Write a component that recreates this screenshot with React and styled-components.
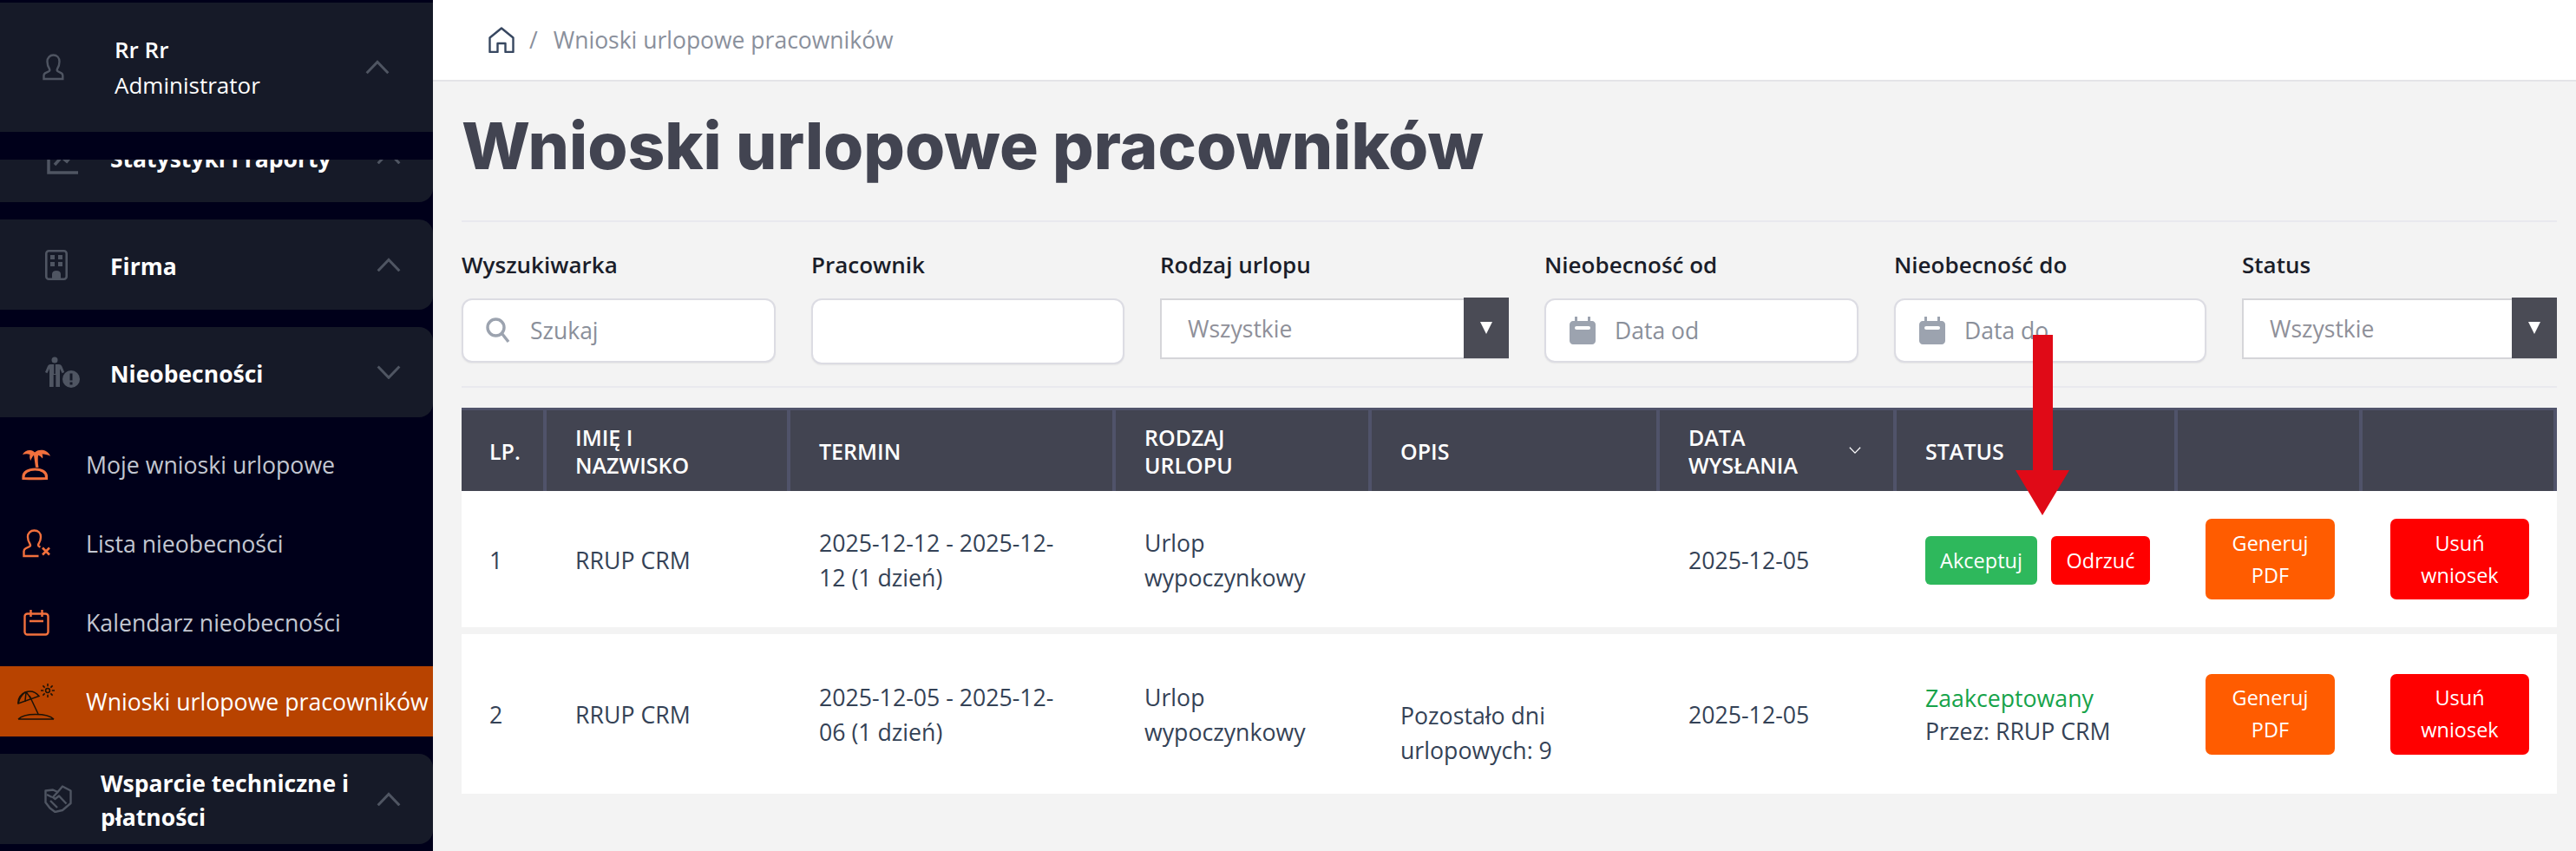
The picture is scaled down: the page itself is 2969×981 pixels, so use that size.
import React from 'react';
import styled, { createGlobalStyle } from 'styled-components';

const GlobalStyle = createGlobalStyle`
  html, body {
    margin: 0;
    padding: 0;
    background: #f3f3f3;
  }
  body {
    font-family: 'Open Sans', 'Noto Sans', sans-serif;
    overflow: hidden;
  }
  * {
    box-sizing: border-box;
  }
`;

const Page = styled.div`
  display: flex;
  width: 2969px;
  height: 981px;
  overflow: hidden;
`;

const Sidebar = styled.aside`
  flex: 0 0 499px;
  height: 981px;
  padding-top: 3px;
  background: #00001a;
  overflow: hidden;
`;

const ProfileCard = styled.div`
  display: flex;
  align-items: center;
  height: 149px;
  background: #161a28;
  color: #fff;
  margin-bottom: 32px;
`;

const ProfileText = styled.div`
  flex: 1;
  font-size: 26px;
  line-height: 41px;
  font-weight: 400;

  b {
    display: block;
    font-weight: 600;
  }
`;

const NavCard = styled.div`
  display: flex;
  align-items: ${p => (p.$clipped ? 'flex-end' : 'center')};
  height: ${p => (p.$clipped ? '49px' : '104px')};
  margin-bottom: ${p => p.$gap || 20}px;
  background: #161a28;
  border-radius: ${p => (p.$clipped ? '0 0 16px 0' : '0 16px 16px 0')};
  overflow: hidden;
`;

const NavCardInner = styled.div`
  display: flex;
  align-items: center;
  flex: 1;
  height: 104px;
  flex-shrink: 0;
  color: #fff;
  font-size: 26.500px;
  font-weight: 700;
  line-height: 39px;
`;

const CardIcon = styled.div`
  flex: 0 0 ${p => p.$width}px;
  padding-left: ${p => p.$inset}px;
  display: flex;
  align-items: center;
`;

const CardLabel = styled.div`
  flex: 1;
  padding-top: 4px;
`;

const ChevronSlot = styled.div`
  flex: 0 0 ${p => p.$width || 65}px;
  display: flex;
`;

const SubList = styled.div`
  padding-top: 13px;
  margin-bottom: 20px;
  display: flex;
  flex-direction: column;
  gap: 10px;
`;

const SubItem = styled.div`
  display: flex;
  align-items: center;
  height: 81px;
  background: ${p => (p.$active ? '#b84300' : 'transparent')};
  color: ${p => (p.$active ? '#fff' : '#c3c7d1')};
  font-size: 26.700px;
  white-space: nowrap;
`;

const SubIcon = styled.div`
  flex: 0 0 99px;
  padding-right: 15px;
  display: flex;
  justify-content: center;
`;

const Main = styled.main`
  flex: 1;
  position: relative;
  min-width: 0;
`;

const TopBar = styled.header`
  display: flex;
  align-items: center;
  height: 94px;
  padding-left: 64px;
  background: #fff;
  border-bottom: 2px solid #e4e4e8;
  color: #8a909c;
  font-size: 26.500px;
`;

const Slash = styled.span`
  margin: 0 18px 0 17px;
`;

const Content = styled.div`
  padding: 0 22px 0 33px;
`;

const Title = styled.h1`
  display: flex;
  align-items: center;
  height: 162px;
  margin: 0;
  padding-bottom: 12px;
  border-bottom: 2px solid #e9e9ee;
  color: #424451;
  font-family: 'Inter', sans-serif;
  font-size: 74.700px;
  font-weight: 800;
`;

const Filters = styled.div`
  display: grid;
  grid-template-columns: 362px 361px 402px 362px 360px 363px;
  column-gap: 41px;
  align-items: start;
  padding: 31px 0 25px;
  border-bottom: 2px solid #e9e9ee;
`;

const FilterLabel = styled.label`
  display: block;
  height: 36px;
  margin-bottom: 21px;
  color: #1a1d29;
  font-size: 26px;
  font-weight: 600;
  line-height: 36px;
`;

const InputBox = styled.div`
  display: flex;
  align-items: center;
  gap: ${p => p.$gap}px;
  height: ${p => p.$height || 74}px;
  padding-left: 26px;
  background: #fff;
  border: 2px solid #dcdce3;
  border-radius: 12px;
  box-shadow: 0 1px 2px rgba(0, 0, 0, 0.06);
  color: #8a8f9a;
  font-size: 26.500px;
`;

const SelectBox = styled.div`
  display: flex;
  align-items: center;
  justify-content: space-between;
  height: 70px;
  padding-left: 30px;
  background: #fff;
  border: 2px solid #d5d5d9;
  border-right: 0;
  color: #8f9099;
  font-size: 26.500px;
`;

const SelectArrow = styled.div`
  display: flex;
  align-items: center;
  justify-content: center;
  width: 52px;
  height: 70px;
  margin-top: -2px;
  background: #4a4b55;

  &::after {
    content: '';
    border-left: 7px solid transparent;
    border-right: 7px solid transparent;
    border-top: 14px solid #fff;
  }
`;

const Table = styled.div`
  margin-top: 23px;
`;

const columns = '98px 281px 375px 295px 332px 273px 324px 213px 224px';

const HeadRow = styled.div`
  display: grid;
  grid-template-columns: ${columns};
  height: 96px;
  background: #424451;
  border-top: 3px solid #50536a;
`;

const HeadCell = styled.div`
  display: flex;
  align-items: center;
  justify-content: space-between;
  padding: 0 37px 0 ${p => (p.$first ? 32 : 33)}px;
  border-right: 4px solid #50536a;
  color: #fff;
  font-size: 25px;
  font-weight: 600;
  line-height: 32px;
  text-transform: uppercase;
`;

const HeadLabel = styled.span`
  max-width: 170px;
`;

const BodyRow = styled.div`
  display: grid;
  grid-template-columns: ${columns};
  height: ${p => p.$height}px;
  margin-bottom: 8px;
  background: #fff;
  color: #344256;
  font-size: 26.700px;
  line-height: 40px;
`;

const Cell = styled.div`
  display: flex;
  align-items: center;
  padding: ${p => (p.$shifted ? '44px' : '2px')} 45px 0 ${p => (p.$first ? 32 : 33)}px;
`;

const ActionCell = styled(Cell)`
  padding: 0;
`;

const StatusCell = styled(Cell)`
  gap: 16px;
  padding-right: 0;
`;

const StatusText = styled.div`
  white-space: nowrap;
  line-height: 38px;
`;

const Accepted = styled.div`
  color: #16a34a;
`;

const SmallButton = styled.button`
  height: 56px;
  width: ${p => p.$width}px;
  padding: 0;
  border: 0;
  border-radius: 6px;
  background: ${p => p.$bg};
  color: #fff;
  font-family: inherit;
  font-size: 23.500px;
  cursor: pointer;
`;

const BigButton = styled.button`
  width: ${p => p.$width}px;
  height: 93px;
  margin-left: 32px;
  padding: 0 10px;
  border: 0;
  border-radius: 7px;
  background: ${p => p.$bg};
  color: #fff;
  font-family: inherit;
  font-size: 23.500px;
  line-height: 37px;
  cursor: pointer;
`;

const Arrow = styled.svg`
  position: absolute;
  left: 1824px;
  top: 386px;
`;

const Chevron = ({ up, color = '#4f5562', size = 28, weight = 3 }) => (
  <svg width={size} height={size * 0.6} viewBox="0 0 28 17" fill="none" stroke={color} strokeWidth={weight}>
    <path d={up ? 'M1.5 15.5 14 2.5l12.5 13' : 'M1.5 1.5 14 14.5 26.5 1.5'} />
  </svg>
);

const UserIcon = () => (
  <svg width="25" height="31" viewBox="0 0 25 31" fill="none" stroke="#4f5562" strokeWidth="2.4">
    <path d="M8 17.5C6 14.5 5.5 12 5.5 9c0-4.5 3-7.5 7-7.5s7 3 7 7.5c0 3-.5 5.5-2.5 8.5-.5 1-.3 2 .8 2.7l4 2.2c1 .6 1.5 1.400 1.500 2.600v4H1.500v-4c0-1.200.5-2 1.500-2.600l4.200-2.200c1.100-.7 1.300-1.700.8-2.700z" />
  </svg>
);

const StatsIcon = () => (
  <svg width="36" height="40" viewBox="0 0 36 40" fill="none" stroke="#4f5562" strokeWidth="3.5">
    <path d="M2 2v36h34" />
    <path d="M9 29l8-9 6 5 9-11" />
  </svg>
);

const BuildingIcon = () => (
  <svg width="26" height="35" viewBox="0 0 26 35" fill="none">
    <rect x="1.300" y="1.300" width="23.400" height="32.400" rx="3" stroke="#4f5562" strokeWidth="2.600" />
    <g fill="#4f5562">
      <rect x="6" y="6" width="5" height="5" />
      <rect x="15" y="6" width="5" height="5" />
      <rect x="6" y="14" width="5" height="5" />
      <rect x="15" y="14" width="5" height="5" />
      <path d="M8 34v-6c0-2.500 2-4 5-4s5 1.500 5 4v6z" />
    </g>
  </svg>
);

const AbsenceIcon = () => (
  <svg width="40" height="36" viewBox="0 0 40 36" fill="#4f5562">
    <circle cx="11" cy="4" r="3.500" />
    <path d="M6 9h10c1.500 0 2.500.7 3.200 2l3 7-2.600 1.300L17 14v21h-4.700V21h-2.600v14H5V14l-2.600 5.300L0 18l3-7c.7-1.300 1.600-2 3-2z" />
    <rect x="10.200" y="9" width="1.600" height="11" fill="#161a28" />
    <circle cx="30" cy="26" r="10" />
    <rect x="28.500" y="19.500" width="3" height="8" fill="#161a28" />
    <rect x="28.500" y="29.500" width="3" height="3" fill="#161a28" />
  </svg>
);

const HandshakeIcon = () => (
  <svg width="32" height="32" viewBox="0 0 32 32" fill="none" stroke="#4f5562" strokeWidth="2.400" strokeLinejoin="round">
    <path d="M1.500 6.500 10 5.500l5.500 2.500L21 1.500l9.500 5v14.500L21 29l-8.500 2-6-4.500-5-6.500z" />
    <path d="M15.500 8 10 14l2.500 2 4.500-3.500 8.500 9" />
    <path d="M7 18l8 8M3 11l6 3" />
  </svg>
);

const PalmIcon = () => (
  <svg width="34" height="36" viewBox="0 0 34 36" fill="none">
    <path
      fill="#f2703d"
      d="M1 6C3 2 7 .5 10 1c2 .2 3.500 1 5 2.500C18 .8 21 .5 24 .8c4 .5 7.500 3 9 7-3-1.500-6.500-2.500-9.500-2.200 1 2 1 3.500.5 5-1.500-2-3.500-3.500-5-3.800-.5 4-.5 8.500.5 14.200l-3.500-.2-2-14C12 9 11 11 10.300 13 9 10 9 8 9.500 6 7 4.800 4 5 1 6z"
    />
    <path
      fill="none"
      stroke="#f2703d"
      strokeWidth="3.200"
      d="M2 33.500v-2c0-5 5.500-8.500 13.500-8.500S28.500 26.500 28.500 31.500v2c-8 .3-18 .3-26.500 0z"
    />
  </svg>
);

const UserXIcon = () => (
  <svg width="32" height="33" viewBox="0 0 32 33" fill="none" stroke="#f2703d" strokeWidth="2.400">
    <path d="M18.500 31H1.500v-5.500c0-1.500.8-2.500 2-3.200l4.500-2.300c1.200-.7 1.200-1.800.5-3-1.800-2.800-2.500-5.500-2.500-8C6 4.500 9 1.500 13.500 1.500S21 4.500 21 9c0 2.500-.7 5.200-2.500 8-.8 1.200-.5 2.300.8 3l1.200.6" />
    <path d="M23 21.500l8 8M31 21.500l-8 8" strokeWidth="2.600" />
  </svg>
);

const CalendarIcon = ({ color = '#f2703d' }) => (
  <svg width="30" height="30" viewBox="0 0 30 30" fill="none" stroke={color} strokeWidth="2.400">
    <rect x="1.500" y="4.500" width="27" height="24" rx="3" />
    <path d="M8.500 0v8M21.500 0v8M7 13h16" />
  </svg>
);

const BeachIcon = () => (
  <svg width="44" height="42" viewBox="0 0 44 42" fill="none" stroke="#1a1208" strokeWidth="1.500">
    <path d="M1 41h41M1 41c4-4 12-5.500 20-5.500s17 1.500 21 5.500" />
    <path d="M14 14l10 21" />
    <path d="M1 23c-.5-6 3-11 8-13 6-2.200 12-.5 16 4.500z" />
    <path d="M1 23c1-5 3-9 8-13M9 21c0-4 1-8 1-11.500M16 18c-2-3-4-6-6-8.500" />
    <circle cx="35" cy="8" r="2.400" />
    <path d="M35 0v3.200M35 12.800V16M27 8h3.200M39.800 8H43M29.400 2.400l2.200 2.200M38.400 11.400l2.200 2.200M29.400 13.600l2.200-2.200M38.400 4.600l2.200-2.200" />
  </svg>
);

const HomeIcon = () => (
  <svg width="30" height="30" viewBox="0 0 30 30" fill="none" stroke="#374760" strokeWidth="2.400">
    <path d="M1.500 29V12.500L15 1.500l13.500 11V29h-9V19h-9v10z" strokeLinejoin="round" />
  </svg>
);

const SearchIcon = () => (
  <svg width="28" height="30" viewBox="0 0 28 30" fill="none" stroke="#9ca3af" strokeWidth="3.400">
    <circle cx="11.500" cy="11.500" r="9.500" />
    <path d="M18.500 18.500 26 28" />
  </svg>
);

const CalendarFilled = () => (
  <svg width="32" height="32" viewBox="0 0 32 32" fill="#9ca3af">
    <path d="M7 0h3v5h12V0h3v5h2c2 0 4 2 4 4v19c0 2-2 4-4 4H5c-2 0-4-2-4-4V9c0-2 2-4 4-4h2z" />
    <rect x="7" y="11" width="18" height="4" rx="2" fill="#fff" />
  </svg>
);

const filters = [
  { label: 'Wyszukiwarka', kind: 'search', text: 'Szukaj' },
  { label: 'Pracownik', kind: 'text', text: '' },
  { label: 'Rodzaj urlopu', kind: 'select', text: 'Wszystkie' },
  { label: 'Nieobecność od', kind: 'date', text: 'Data od' },
  { label: 'Nieobecność do', kind: 'date', text: 'Data do' },
  { label: 'Status', kind: 'select', text: 'Wszystkie' }
];

const headers = ['Lp.', 'Imię i nazwisko', 'Termin', 'Rodzaj urlopu', 'Opis', 'Data wysłania', 'Status', '', ''];

const renderFilter = ({ kind, text }) => {
  if (kind === 'select') {
    return (
      <SelectBox>
        {text}
        <SelectArrow />
      </SelectBox>
    );
  }
  return (
    <InputBox $height={kind === 'text' ? 76 : 74} $gap={kind === 'search' ? 23 : 21}>
      {kind === 'search' && <SearchIcon />}
      {kind === 'date' && <CalendarFilled />}
      {text}
    </InputBox>
  );
};

const Row = ({ height, no, term, note, status }) => (
  <BodyRow $height={height}>
    <Cell $first>{no}</Cell>
    <Cell>RRUP CRM</Cell>
    <Cell>{term}</Cell>
    <Cell>Urlop wypoczynkowy</Cell>
    <Cell $shifted>{note}</Cell>
    <Cell>2025-12-05</Cell>
    <StatusCell>{status}</StatusCell>
    <ActionCell>
      <BigButton $bg="#ff5c00" $width={149}>Generuj PDF</BigButton>
    </ActionCell>
    <ActionCell>
      <BigButton $bg="#ff0000" $width={160}>Usuń wniosek</BigButton>
    </ActionCell>
  </BodyRow>
);

export default function App() {
  return (
    <Page>
      <GlobalStyle />
      <Sidebar>
        <ProfileCard>
          <CardIcon $width={132} $inset={49}><UserIcon /></CardIcon>
          <ProfileText>
            <b>Rr Rr</b>
            Administrator
          </ProfileText>
          <ChevronSlot $width={78}><Chevron up /></ChevronSlot>
        </ProfileCard>

        <NavCard $clipped>
          <NavCardInner>
            <CardIcon $width={127} $inset={54}><StatsIcon /></CardIcon>
            <CardLabel>Statystyki i raporty</CardLabel>
            <ChevronSlot><Chevron up /></ChevronSlot>
          </NavCardInner>
        </NavCard>

        <NavCard>
          <NavCardInner>
            <CardIcon $width={127} $inset={52}><BuildingIcon /></CardIcon>
            <CardLabel>Firma</CardLabel>
            <ChevronSlot><Chevron up /></ChevronSlot>
          </NavCardInner>
        </NavCard>

        <NavCard $gap={1}>
          <NavCardInner>
            <CardIcon $width={127} $inset={52}><AbsenceIcon /></CardIcon>
            <CardLabel>Nieobecności</CardLabel>
            <ChevronSlot><Chevron /></ChevronSlot>
          </NavCardInner>
        </NavCard>

        <SubList>
          <SubItem>
            <SubIcon><PalmIcon /></SubIcon>
            Moje wnioski urlopowe
          </SubItem>
          <SubItem>
            <SubIcon><UserXIcon /></SubIcon>
            Lista nieobecności
          </SubItem>
          <SubItem>
            <SubIcon><CalendarIcon /></SubIcon>
            Kalendarz nieobecności
          </SubItem>
          <SubItem $active>
            <SubIcon><BeachIcon /></SubIcon>
            Wnioski urlopowe pracowników
          </SubItem>
        </SubList>

        <NavCard>
          <NavCardInner>
            <CardIcon $width={116} $inset={51}><HandshakeIcon /></CardIcon>
            <CardLabel>Wsparcie techniczne i płatności</CardLabel>
            <ChevronSlot><Chevron up /></ChevronSlot>
          </NavCardInner>
        </NavCard>
      </Sidebar>

      <Main>
        <TopBar>
          <HomeIcon />
          <Slash>/</Slash>
          Wnioski urlopowe pracowników
        </TopBar>
        <Content>
          <Title>Wnioski urlopowe pracowników</Title>
          <Filters>
            {filters.map(filter => (
              <div key={filter.label}>
                <FilterLabel>{filter.label}</FilterLabel>
                {renderFilter(filter)}
              </div>
            ))}
          </Filters>
          <Table>
            <HeadRow>
              {headers.map((header, i) => (
                <HeadCell key={i} $first={i === 0}>
                  <HeadLabel>{header}</HeadLabel>
                  {i === 5 && <Chevron color="#fff" size={14} weight={2.500} />}
                </HeadCell>
              ))}
            </HeadRow>
            <Row
              height={157}
              no="1"
              term="2025-12-12 - 2025-12-12 (1 dzień)"
              status={
                <>
                  <SmallButton $bg="#2eb85c" $width={129}>Akceptuj</SmallButton>
                  <SmallButton $bg="#ff0000" $width={114}>Odrzuć</SmallButton>
                </>
              }
            />
            <Row
              height={184}
              no="2"
              term="2025-12-05 - 2025-12-06 (1 dzień)"
              note="Pozostało dni urlopowych: 9"
              status={
                <StatusText>
                  <Accepted>Zaakceptowany</Accepted>
                  Przez: RRUP CRM
                </StatusText>
              }
            />
          </Table>
        </Content>
        <Arrow width="62" height="208" viewBox="0 0 62 208" fill="#e00a17">
          <path d="M20 0h23v156h19l-31 52L0 156h20z" />
        </Arrow>
      </Main>
    </Page>
  );
}
